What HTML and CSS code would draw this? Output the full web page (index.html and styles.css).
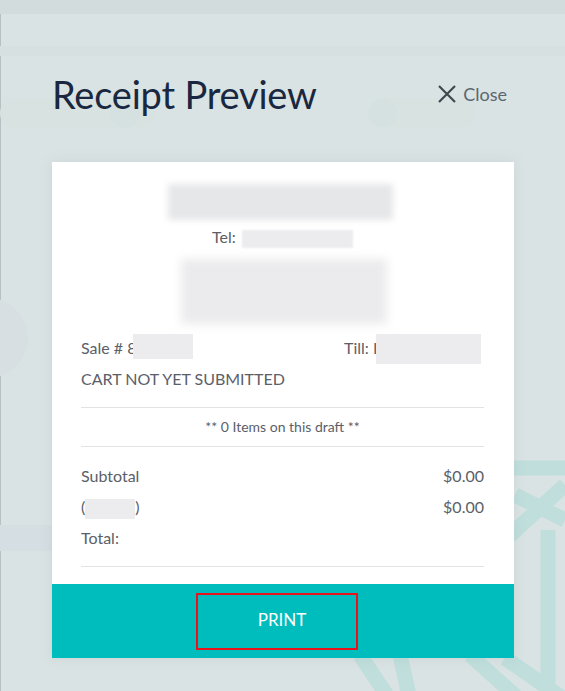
FILE: index.html
```html
<!DOCTYPE html>
<html lang="en">
<head>
    <meta charset="UTF-8">
    <meta name="viewport" content="width=device-width, initial-scale=1.0">
    <title>Receipt Preview</title>
    <link rel="stylesheet" href="styles.css">
</head>
<body>
    <div class="backdrop">
        <svg width="565" height="691" viewBox="0 0 565 691">
            <rect x="0" y="0" width="565" height="14" fill="#d3dcdd"/>
            <rect x="0" y="46" width="565" height="10" fill="#d7e0e0"/>
            <rect x="0" y="98" width="155" height="30" rx="15" fill="#d7e2e1"/>
            <circle cx="125" cy="113" r="15" fill="#d5e1e0"/>
            <rect x="368" y="98" width="108" height="30" rx="15" fill="#d7e2e1"/>
            <circle cx="383" cy="113" r="14" fill="#d5e1e0"/>
            <circle cx="-12" cy="338" r="40" fill="#d7dfe3"/>
            <rect x="0" y="525" width="60" height="26" fill="#d5dee3"/>
            <g stroke="#bfdedc" stroke-width="15" fill="none">
                <path d="M500 468 L565 468"/>
                <path d="M565 485 L505 540"/>
                <path d="M515 495 L565 520"/>
                <path d="M548 530 L548 691"/>
                <path d="M505 658 L565 700"/>
                <path d="M360 655 L390 700"/>
                <path d="M400 655 L410 700"/>
                <path d="M470 655 L520 700"/>
            </g>
        </svg>
    </div>

    <div class="modal">
        <div class="modal-head">
            <h1>Receipt Preview</h1>
            <button class="close">
                <svg width="20" height="20" viewBox="0 0 20 20">
                    <path d="M2 2 L18 18 M18 2 L2 18" stroke="#3f4750" stroke-width="2.2" fill="none"/>
                </svg>
                <span>Close</span>
            </button>
        </div>

        <div class="receipt">
            <div class="receipt-body">
                <div class="blur blur-name"></div>
                <div class="tel">Tel: <span class="blur blur-tel"></span></div>
                <div class="blur blur-address"></div>

                <div class="meta-row">
                    <div>Sale # 8<span class="blur blur-sale"></span></div>
                    <div class="till">Till: I<span class="blur blur-till"></span></div>
                </div>
                <div class="status">CART NOT YET SUBMITTED</div>

                <div class="draft">** 0 Items on this draft **</div>

                <div class="totals">
                    <div class="total-row"><span>Subtotal</span><span>$0.00</span></div>
                    <div class="total-row"><span>(<span class="blur blur-tax"></span>)</span><span>$0.00</span></div>
                    <div class="total-row"><span>Total:</span><span></span></div>
                </div>
            </div>
            <div class="receipt-foot">
                <button class="print">PRINT</button>
            </div>
        </div>
    </div>
</body>
</html>
```

FILE: styles.css
```css
body {
    margin: 0;
    width: 565px;
    height: 691px;
    overflow: hidden;
    background-color: #dae3e3;
    font-family: 'Lato', 'Open Sans', sans-serif;
    color: #5b6068;
    position: relative;
    box-shadow: inset 1px 0 0 #b8c0c2;
}
.backdrop {
    position: absolute;
    left: 0;
    top: 0;
}
.backdrop svg {
    display: block;
}
.modal {
    position: relative;
    padding: 70px 51px 0 52px;
}
.modal-head {
    display: flex;
    align-items: center;
    justify-content: space-between;
    height: 48px;
    margin-bottom: 44px;
}
.modal-head h1 {
    margin: 0;
    font-size: 38px;
    font-weight: 400;
    color: #192840;
    letter-spacing: -0.2px;
}
.close {
    display: flex;
    align-items: center;
    gap: 6px;
    background: none;
    border: none;
    padding: 0;
    margin-right: 7px;
    font-family: inherit;
    font-size: 18px;
    color: #5c6670;
    cursor: pointer;
}
.receipt {
    background-color: #fff;
    width: 462px;
    box-shadow: 0 0 12px rgba(120, 140, 140, 0.15);
}
.receipt-body {
    padding: 18px 30px 17px 29px;
}
.blur {
    display: inline-block;
    background-color: #e6e7e9;
    filter: blur(3px);
    vertical-align: middle;
}
.blur-name {
    display: block;
    width: 225px;
    height: 36px;
    margin: 4px 0 0 87px;
}
.tel {
    text-align: center;
    font-size: 16px;
    margin-top: 7px;
    height: 20px;
    line-height: 20px;
}
.blur-tel {
    width: 111px;
    height: 18px;
    background-color: #ececee;
    filter: blur(1px);
    margin-left: 2px;
}
.blur-address {
    display: block;
    width: 206px;
    height: 65px;
    margin: 12px 0 0 100px;
    filter: blur(5px);
    background-color: #ebebed;
}
.meta-row {
    display: flex;
    justify-content: space-between;
    font-size: 16px;
    margin-top: 10px;
    height: 28px;
    line-height: 28px;
}
.till {
    width: 140px;
}
.blur-sale {
    width: 60px;
    height: 25px;
    background-color: #ececee;
    filter: none;
    margin-left: -4px;
    vertical-align: top;
}
.blur-till {
    width: 105px;
    height: 30px;
    background-color: #ececee;
    filter: none;
    margin-left: -1px;
    vertical-align: top;
}
.status {
    font-size: 16px;
    margin-top: 4px;
    height: 26px;
    line-height: 26px;
    padding-bottom: 15px;
    border-bottom: 1px solid #e2e3e5;
}
.draft {
    text-align: center;
    font-size: 14px;
    height: 38px;
    line-height: 38px;
    border-bottom: 1px solid #e2e3e5;
}
.totals {
    padding: 13px 0 13px;
    border-bottom: 1px solid #e2e3e5;
}
.total-row {
    display: flex;
    justify-content: space-between;
    font-size: 16px;
    height: 31px;
    line-height: 31px;
}
.blur-tax {
    width: 50px;
    height: 20px;
    background-color: #ececee;
    filter: none;
}
.receipt-foot {
    background-color: #00bdbd;
    height: 74px;
    display: flex;
    justify-content: center;
    align-items: center;
}
.print {
    width: 162px;
    height: 57px;
    padding: 0 0 4px 10px;
    background: none;
    border: 2px solid #e8141c;
    color: #fff;
    font-family: inherit;
    font-size: 17px;
    margin-left: -12px;
    cursor: pointer;
}
```
